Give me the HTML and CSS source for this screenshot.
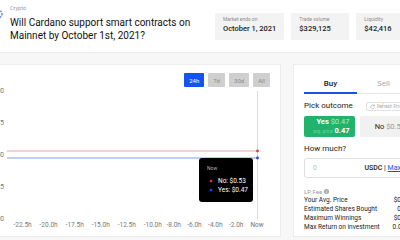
FILE: index.html
```html
<!DOCTYPE html>
<html lang="en">
<head>
<meta charset="utf-8">
<title>Market</title>
<link rel="stylesheet" href="styles.css">
</head>
<body>
<div class="page">
  <header class="topbar">
    <div class="title-wrap">
      <svg class="cat-icon" width="10" height="10" viewBox="0 0 10 10"><circle cx="5" cy="5" r="4" fill="none" stroke="#3d6ef2" stroke-width="1.2" stroke-dasharray="1.6 1"/></svg>
      <div class="title-block">
        <div class="category">Crypto</div>
        <h1 class="title">Will Cardano support smart contracts on<br>Mainnet by October 1st, 2021?</h1>
      </div>
    </div>
    <div class="stats">
      <div class="stat"><div class="stat-label">Market ends on</div><div class="stat-value">October 1, 2021</div></div>
      <div class="stat"><div class="stat-label">Trade volume</div><div class="stat-value">$329,125</div></div>
      <div class="stat"><div class="stat-label">Liquidity</div><div class="stat-value">$42,416</div></div>
    </div>
  </header>
  <main class="content">
    <section class="chart-card">
      <div class="ranges">
        <button class="range active">24h</button>
        <button class="range">7d</button>
        <button class="range">30d</button>
        <button class="range">All</button>
      </div>
      <svg class="chart" width="299" height="148" viewBox="0 0 299 148">
        <g class="axis-y">
          <text x="23" y="4">1.00</text>
          <text x="23" y="36">0.75</text>
          <text x="23" y="68">0.50</text>
          <text x="23" y="100">0.25</text>
          <text x="23" y="132">0.00</text>
        </g>
        <line class="crosshair" x1="276.5" y1="4" x2="276.5" y2="132"/>
        <line class="line-no" x1="26" y1="64" x2="276" y2="64"/>
        <line class="line-yes" x1="26" y1="71" x2="276" y2="71"/>
        <circle class="dot-no" cx="276.5" cy="64" r="1.4"/>
        <circle class="dot-yes" cx="276.5" cy="71" r="1.4"/>
        <g class="axis-x">
          <text x="41.6" y="138">-22.5h</text>
          <text x="67.6" y="138">-20.0h</text>
          <text x="93.7" y="138">-17.5h</text>
          <text x="119.7" y="138">-15.0h</text>
          <text x="145.8" y="138">-12.5h</text>
          <text x="171.8" y="138">-10.0h</text>
          <text x="192.7" y="138">-8.0h</text>
          <text x="213.5" y="138">-6.0h</text>
          <text x="234.3" y="138">-4.0h</text>
          <text x="255.2" y="138">-2.0h</text>
          <text x="276" y="138">Now</text>
        </g>
        <g class="tooltip">
          <rect x="218" y="71" width="54" height="44" rx="3"/>
          <text class="tt-title" x="226" y="82">Now</text>
          <circle class="dot-no" cx="230" cy="94" r="1.3"/>
          <text class="tt-text" x="237" y="94">No: $0.53</text>
          <circle class="dot-yes" cx="230" cy="103" r="1.3"/>
          <text class="tt-text" x="237" y="103">Yes: $0.47</text>
        </g>
      </svg>
    </section>
    <aside class="trade-card">
      <div class="tabs">
        <div class="tab active">Buy</div>
        <div class="tab">Sell</div>
      </div>
      <div class="pick-row">
        <span class="label">Pick outcome</span>
        <button class="refresh"><svg width="5" height="5" viewBox="0 0 10 10"><path d="M8 3.5A3.6 3.6 0 1 0 8.6 6.5" fill="none" stroke="#aaa" stroke-width="1.2"/><path d="M8.6 1v3H5.6" fill="none" stroke="#aaa" stroke-width="1.2"/></svg>Refresh Prices</button>
      </div>
      <div class="outcomes">
        <div class="outcome yes">
          <div class="o-line"><b>Yes</b> <span class="o-price">$0.47</span></div>
          <div class="o-line"><span class="o-faint">avg. price</span> <b>0.47</b></div>
        </div>
        <div class="outcome no">
          <div class="o-line"><span class="o-name">No</span> <span class="o-price">$0.53</span></div>
        </div>
      </div>
      <div class="label how">How much?</div>
      <div class="amount">
        <span class="placeholder">0</span>
        <span class="unit">USDC | <a class="max" href="#">Max</a></span>
      </div>
      <div class="fee">LP Fee <span class="info">i</span></div>
      <div class="summary">
        <div class="row"><span>Your Avg. Price</span><span>$0.47</span></div>
        <div class="row"><span>Estimated Shares Bought</span><span>0.00</span></div>
        <div class="row"><span>Maximum Winnings</span><span>$0.00</span></div>
        <div class="row"><span>Max Return on investment</span><span>0.00%</span></div>
      </div>
    </aside>
  </main>
</div>
</body>
</html>
```
FILE: styles.css
```css
* { box-sizing: border-box; margin: 0; padding: 0; }
html, body { width: 400px; height: 240px; overflow: hidden; }
body {
  background: #fff;
  font-family: Roboto, "Liberation Sans", Arial, sans-serif;
  color: #1b1b1b;
}
.page { margin-left: -20px; width: 460px; }

.topbar {
  display: flex;
  align-items: center;
  height: 53px;
  border-bottom: 1px solid #ececec;
  padding-left: 13px;
}
.title-wrap { display: flex; align-self: flex-start; padding-top: 5px; }
.cat-icon { display: block; margin-top: 3.5px; margin-right: 7px; flex: none; }
.title-block { width: 205px; }
.category { font-size: 5.5px; line-height: 7px; color: #9a9a9a; margin-bottom: 4px; }
.title { font-size: 10px; line-height: 13px; font-weight: 400; color: #111; }

.stats { display: flex; gap: 7px; }
.stat { min-width: 58px; height: 27px; padding: 3px 8px 0; background: #f3f3f3; }
.stat-label { font-size: 5px; line-height: 7px; color: #8c8c8c; white-space: nowrap; }
.stat-value { font-size: 7.5px; line-height: 10px; font-weight: 500; margin-top: 1px; color: #1b1b1b; white-space: nowrap; }

.content {
  display: flex;
  gap: 12px;
  height: 187px;
  padding: 11px 0 3px;
  background: #f7f7f7;
}
.chart-card {
  width: 301px;
  background: #fff;
  border: 1px solid #ececec;
  display: flex;
  flex-direction: column;
}
.ranges { display: flex; justify-content: flex-end; gap: 4px; padding: 8px 10px 0 0; }
.range {
  height: 14px;
  padding: 0 5px;
  border: 0;
  border-radius: 1px;
  background: #cfcfcf;
  color: #8b8b8b;
  font-family: inherit;
  font-size: 6px;
}
.range.active { background: #1652f0; color: #fff; }
.chart { display: block; }
.chart text { font-family: Roboto, "Liberation Sans", Arial, sans-serif; }
.axis-y text { font-size: 6.5px; fill: #777; text-anchor: end; dominant-baseline: middle; }
.axis-x text { font-size: 6.5px; fill: #777; text-anchor: middle; dominant-baseline: middle; }
.crosshair { stroke: #dcdcdc; stroke-width: 1; }
.line-no { stroke: #f5bccb; stroke-width: 1.4; }
.line-yes { stroke: #a9bff5; stroke-width: 1.4; }
.dot-no { fill: #ee2d55; }
.dot-yes { fill: #1f45f0; }
.tooltip rect { fill: #000; }
.tt-title { font-size: 5px; fill: #b5b5b5; dominant-baseline: middle; }
.tt-text { font-size: 6.5px; fill: #fff; dominant-baseline: middle; }

.trade-card {
  width: 128px;
  flex: none;
  background: #fff;
  border: 1px solid #ececec;
  padding: 9px 10px 0;
}
.tabs { display: flex; }
.tab {
  flex: 1;
  height: 20px;
  line-height: 19px;
  text-align: center;
  font-size: 8px;
  color: #aaa;
  border-bottom: 1px solid #e6e6e6;
}
.tab.active { color: #1b1b1b; font-weight: 500; border-bottom: 2px solid #1652f0; }
.pick-row {
  display: flex;
  justify-content: space-between;
  align-items: center;
  height: 14px;
  margin-top: 5px;
}
.label { font-size: 8px; line-height: 10px; color: #1b1b1b; }
.refresh {
  display: flex;
  align-items: center;
  gap: 2px;
  height: 9px;
  padding: 0 3px;
  border: 1px solid #e2e2e2;
  border-radius: 2px;
  background: #fff;
  color: #aaa;
  font-family: inherit;
  font-size: 4.5px;
  white-space: nowrap;
}
.outcomes { display: grid; grid-template-columns: 1fr 1fr; gap: 5px; margin-top: 3px; }
.outcome {
  height: 21px;
  border-radius: 2px;
  padding: 0 5px;
  display: flex;
  flex-direction: column;
  justify-content: center;
  align-items: flex-end;
  font-size: 7.5px;
  line-height: 9px;
  white-space: nowrap;
}
.outcome.yes { background: #21b36c; color: #fff; }
.outcome.yes .o-price { color: #a6efc9; }
.outcome.yes b { font-weight: 700; }
.o-faint { color: #6fd3a2; font-size: 4.5px; }
.outcome.no { background: #f1f1f1; }
.outcome.no .o-name { color: #1b1b1b; }
.outcome.no .o-price { color: #9a9a9a; }
.how { margin-top: 7px; }
.amount {
  display: flex;
  justify-content: space-between;
  align-items: center;
  height: 20px;
  margin-top: 4px;
  padding: 0 8px;
  border: 1px solid #e0e0e0;
  border-radius: 3px;
  font-size: 7px;
}
.placeholder { color: #bbb; }
.unit { color: #1b1b1b; font-weight: 500; }
.max { color: #1652f0; text-decoration: underline; font-weight: 400; }
.fee {
  display: flex;
  align-items: center;
  gap: 2px;
  margin-top: 8px;
  height: 10px;
  font-size: 6px;
  color: #9a9a9a;
}
.info {
  display: inline-flex;
  justify-content: center;
  align-items: center;
  width: 5px;
  height: 5px;
  border-radius: 50%;
  background: #a8a8a8;
  color: #fff;
  font-size: 4px;
  font-weight: 700;
}
.summary { font-size: 6.5px; color: #1b1b1b; }
.row { display: flex; justify-content: space-between; line-height: 9px; }
```
